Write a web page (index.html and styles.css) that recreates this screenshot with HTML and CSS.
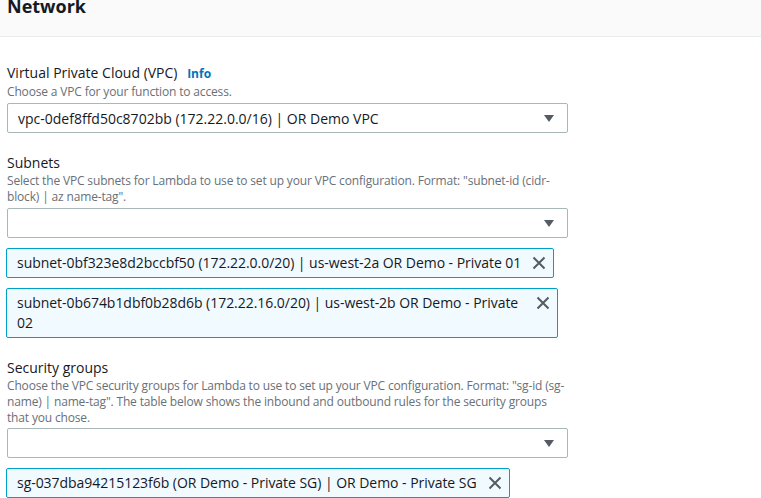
FILE: index.html
```html
<!DOCTYPE html>
<html>
<head>
<meta charset="utf-8">
<link rel="stylesheet" href="styles.css">
</head>
<body>
<div class="panel">
  <div class="panel-header"><h2 class="panel-title">Network</h2></div>
  <div class="panel-body">
    <div class="field">
      <div class="label">Virtual Private Cloud (VPC) <span class="info">Info</span></div>
      <div class="desc">Choose a VPC for your function to access.</div>
      <div class="select"><span class="select-text">vpc-0def8ffd50c8702bb (172.22.0.0/16) | OR Demo VPC</span><span class="caret"></span></div>
    </div>
    <div class="field">
      <div class="label">Subnets</div>
      <div class="desc">Select the VPC subnets for Lambda to use to set up your VPC configuration. Format: "subnet-id (cidr-block) | az name-tag".</div>
      <div class="select"><span class="select-text"></span><span class="caret"></span></div>
      <div class="tokens">
        <div class="token"><span class="token-text">subnet-0bf323e8d2bccbf50 (172.22.0.0/20) | us-west-2a OR Demo - Private 01</span><svg class="x" viewBox="0 0 14 14"><path d="M1.5 1.5 L12.5 12.5 M12.5 1.5 L1.5 12.5"/></svg></div>
        <div class="token"><span class="token-text">subnet-0b674b1dbf0b28d6b (172.22.16.0/20) | us-west-2b OR Demo - Private 02</span><svg class="x" viewBox="0 0 14 14"><path d="M1.5 1.5 L12.5 12.5 M12.5 1.5 L1.5 12.5"/></svg></div>
      </div>
    </div>
    <div class="field">
      <div class="label">Security groups</div>
      <div class="desc desc-tight">Choose the VPC security groups for Lambda to use to set up your VPC configuration. Format: "sg-id (sg-name) | name-tag". The table below shows the inbound and outbound rules for the security groups that you chose.</div>
      <div class="select"><span class="select-text"></span><span class="caret"></span></div>
      <div class="tokens">
        <div class="token"><span class="token-text">sg-037dba94215123f6b (OR Demo - Private SG) | OR Demo - Private SG</span><svg class="x" viewBox="0 0 14 14"><path d="M1.5 1.5 L12.5 12.5 M12.5 1.5 L1.5 12.5"/></svg></div>
      </div>
    </div>
  </div>
</div>
</body>
</html>
```
FILE: styles.css
```css
html, body {
  margin: 0;
  padding: 0;
  background: #ffffff;
}
body {
  font-family: "Open Sans", "Noto Sans", sans-serif;
  color: #16191f;
  overflow: hidden;
}
.panel-header {
  background: #fafafa;
  border-bottom: 1px solid #eaeded;
  height: 36px;
  padding: 0 7px;
  overflow: hidden;
}
.panel-title {
  margin: -5px 0 0 0;
  font-size: 18px;
  line-height: 22px;
  font-weight: 700;
  color: #16191f;
}
.panel-body {
  padding: 25px 0 0 7px;
  width: 561px;
}
.field {
  margin-bottom: 19px;
}
.label {
  font-size: 14px;
  line-height: 20px;
  padding-top: 1px;
  color: #16191f;
}
.info {
  font-size: 12px;
  font-weight: 700;
  color: #0073bb;
  margin-left: 6px;
}
.desc {
  font-size: 12px;
  line-height: 16px;
  letter-spacing: -0.16px;
  color: #687078;
  margin-bottom: 3px;
}
.desc-tight {
  margin-bottom: 2px;
}
.select {
  box-sizing: border-box;
  height: 30px;
  border: 1px solid #aab7b8;
  border-radius: 2px;
  display: flex;
  align-items: center;
  padding: 0 13px 0 10px;
}
.select-text {
  flex: 1;
  font-size: 14px;
  color: #16191f;
}
.caret {
  width: 0;
  height: 0;
  border-left: 5px solid transparent;
  border-right: 5px solid transparent;
  border-top: 7px solid #545b64;
}
.tokens {
  display: flex;
  flex-direction: column;
  align-items: flex-start;
  gap: 10px;
  margin-top: 10px;
  margin-left: -1px;
}
.token {
  box-sizing: border-box;
  max-width: 552px;
  display: flex;
  align-items: flex-start;
  background: #f1faff;
  border: 1px solid #00a1c9;
  border-radius: 2px;
  padding: 4px 7px 4px 10px;
}
.token-text {
  font-size: 14px;
  line-height: 20px;
  letter-spacing: -0.04px;
  color: #16191f;
}
.x {
  width: 14px;
  height: 14px;
  margin: 3px 0 0 11px;
  flex: none;
  fill: none;
  stroke: #545b64;
  stroke-width: 2;
}
```
